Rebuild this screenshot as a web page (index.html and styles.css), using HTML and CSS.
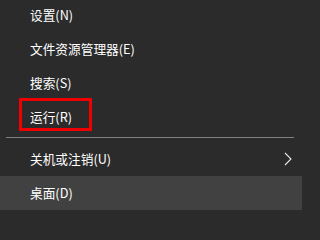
FILE: index.html
```html
<!DOCTYPE html>
<html lang="zh-CN">
<head>
<meta charset="utf-8">
<title>菜单</title>
<link rel="stylesheet" href="styles.css">
</head>
<body>
<div class="menu">
  <div class="item">设置(N)</div>
  <div class="item">文件资源管理器(E)</div>
  <div class="item">搜索(S)</div>
  <div class="item">运行(R)</div>
  <div class="sep"></div>
  <div class="item has-sub">
    <span>关机或注销(U)</span>
    <svg class="chev" width="8" height="14" viewBox="0 0 8 14"><path d="M1 1 L7 7 L1 13" fill="none" stroke="#e8e8e8" stroke-width="1.1"/></svg>
  </div>
  <div class="item hover">桌面(D)</div>
  <div class="mark"></div>
</div>
</body>
</html>
```
FILE: styles.css
```css
html, body {
  margin: 0;
  padding: 0;
  background: #2b2b2b;
  overflow: hidden;
}
.menu {
  position: relative;
  width: 302px;
  margin-top: -2px;
  font-family: "Noto Sans CJK SC", "Microsoft YaHei", sans-serif;
  font-size: 12.7px;
  color: #ffffff;
}
.item {
  height: 34px;
  line-height: 34px;
  padding-left: 30px;
  padding-right: 10px;
  display: flex;
  align-items: center;
  justify-content: space-between;
  white-space: nowrap;
}
.hover {
  background: #414141;
}
.sep {
  height: 1px;
  margin: 3px 8px 4px 6px;
  background: #808080;
}
.chev {
  display: block;
}
.mark {
  position: absolute;
  left: 19px;
  top: 100px;
  width: 67px;
  height: 27px;
  border: 3px solid #f00000;
}
```
